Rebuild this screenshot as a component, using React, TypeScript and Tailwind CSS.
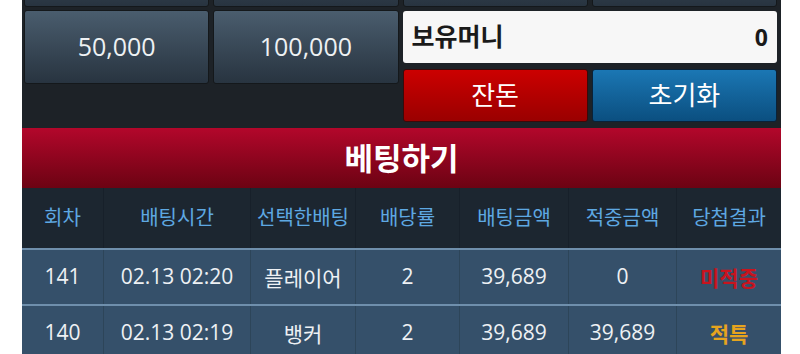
import React from 'react';

const font = "font-['Open_Sans','Noto_Sans_CJK_KR',sans-serif]";

const cols = ['w-[82px]', 'w-[147px]', 'w-[105px]', 'w-[104px]', 'w-[109px]', 'w-[108px]', 'w-[104px]'];
const heads = ['회차', '배팅시간', '선택한배팅', '배당률', '배팅금액', '적중금액', '당첨결과'];

const rows = [
  { no: '141', time: '02.13 02:20', pick: '플레이어', odds: '2', bet: '39,689', win: '0', result: '미적중', color: 'text-[#c8141e]' },
  { no: '140', time: '02.13 02:19', pick: '뱅커', odds: '2', bet: '39,689', win: '39,689', result: '적특', color: 'text-[#e6a41e]' },
];

const ChipButton: React.FC<{ label?: string; className?: string }> = ({ label, className }) => (
  <button className={`flex items-center justify-center rounded-[3px] border border-[#14181b] bg-gradient-to-b from-[#4a5d6e] to-[#283440] text-[25px] text-[#eef1f3] ${className ?? ''}`}>
    {label}
  </button>
);

const App: React.FC = () => {
  return (
    <div className={`h-[354px] w-[800px] overflow-hidden bg-white ${font}`}>
      <div className="ml-[22px] w-[759px] overflow-hidden">
        {/* bet buttons */}
        <div className="bg-[#1d2227] pl-[2px] pr-[4px] pb-[6px]">
          <div className="-mt-[67px] grid grid-cols-4 gap-x-[4px] gap-y-[3px]">
            <ChipButton className="h-[74px]" />
            <ChipButton className="h-[74px]" />
            <ChipButton className="h-[74px]" />
            <ChipButton className="h-[74px]" />
            <ChipButton label="50,000" className="h-[74px]" />
            <ChipButton label="100,000" className="h-[74px]" />
            <div className="col-span-2 flex flex-col gap-[6px] pt-[1px]">
              <div className="flex h-[52px] items-center justify-between rounded-[3px] bg-[#f7f7f7] px-[9px] text-[25px] font-bold text-[#1a1a1a]">
                <span>보유머니</span>
                <span className="text-[23px]">0</span>
              </div>
              <div className="grid grid-cols-2 gap-[4px]">
                <button className="flex h-[53px] items-center justify-center rounded-[3px] border border-[#3a0a0a] bg-gradient-to-b from-[#cc0000] to-[#9a0000] text-[26px] text-white">
                  잔돈
                </button>
                <button className="flex h-[53px] items-center justify-center rounded-[3px] border border-[#0a2238] bg-gradient-to-b from-[#1b77b4] to-[#0b4f80] text-[26px] text-white">
                  초기화
                </button>
              </div>
            </div>
          </div>
        </div>

        {/* title */}
        <div className="flex h-[60px] items-center justify-center bg-gradient-to-b from-[#b3072b] to-[#6c0313] text-[31px] font-bold text-white">
          베팅하기
        </div>

        {/* table */}
        <div className="flex h-[60px] bg-[#1c2630]">
          {heads.map((h, i) => (
            <div key={h} className={`${cols[i]} flex items-center justify-center border-r border-[#17202a] text-[20px] text-[#5ea8e2] last:border-r-0`}>
              {h}
            </div>
          ))}
        </div>
        {rows.map(r => (
          <div key={r.no} className="flex h-[56px] border-t-[2px] border-[#6f8fac] bg-[#35506a] text-[21px] text-[#eef1f4]">
            <div className={`${cols[0]} flex items-center justify-center border-r border-[#2d4559]`}>{r.no}</div>
            <div className={`${cols[1]} flex items-center justify-center border-r border-[#2d4559]`}>{r.time}</div>
            <div className={`${cols[2]} flex items-center justify-center border-r border-[#2d4559] pt-[4px]`}>{r.pick}</div>
            <div className={`${cols[3]} flex items-center justify-center border-r border-[#2d4559]`}>{r.odds}</div>
            <div className={`${cols[4]} flex items-center justify-center border-r border-[#2d4559]`}>{r.bet}</div>
            <div className={`${cols[5]} flex items-center justify-center border-r border-[#2d4559]`}>{r.win}</div>
            <div className={`${cols[6]} flex items-center justify-center pt-[4px] font-bold ${r.color}`}>{r.result}</div>
          </div>
        ))}
      </div>
    </div>
  );
};

export default App;
